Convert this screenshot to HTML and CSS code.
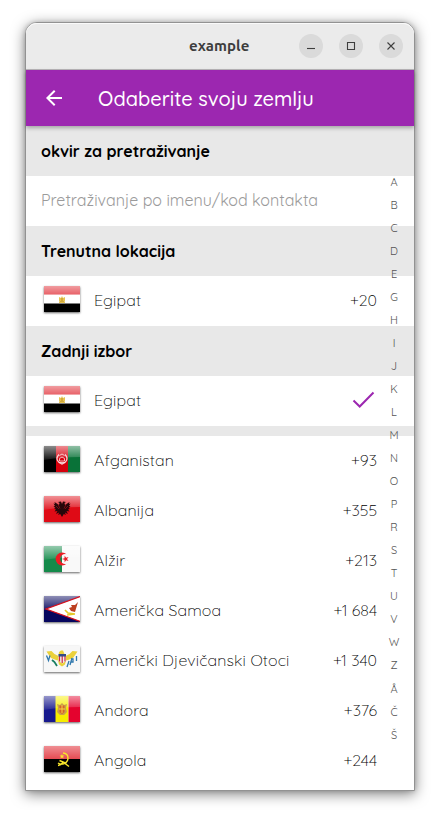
FILE: index.html
```html
<!DOCTYPE html>
<html lang="hr">
<head>
<meta charset="utf-8">
<title>example</title>
<link rel="stylesheet" href="styles.css">
</head>
<body>
<svg class="defs" width="0" height="0">
  <defs>
    <linearGradient id="shine" x1="0" y1="0" x2="0" y2="1">
      <stop offset="0" stop-color="#fff" stop-opacity=".5"/>
      <stop offset="1" stop-color="#fff" stop-opacity=".2"/>
    </linearGradient>
    <linearGradient id="fade" x1="0" y1="0" x2="0" y2="1">
      <stop offset="0" stop-color="#fff" stop-opacity=".55"/>
      <stop offset="1" stop-color="#fff" stop-opacity=".08"/>
    </linearGradient>
    <symbol id="gloss" viewBox="0 0 36 26"><path d="M0 0H36V11Q16 11 0 14Z" fill="url(#fade)"/></symbol>
    <symbol id="egypt" viewBox="0 0 36 26">
      <path fill="#fff" d="M0 0h36v26H0z"/><path fill="#e23a42" d="M0 0h36v8.500H0z"/><path fill="url(#shine)" d="M0 0h36v8.500H0z"/><path d="M0 17.500h36V26H0z"/>
      <path fill="#e8c451" d="M15 11l2 1 1-2 1 2 2-1v4l-1 1h1v1h-6v-1h1l-1-1z"/><path fill="#b98f28" d="M17.500 12h1v3h-1zM15.500 15.500h5v.6h-5z"/>
    </symbol>
  </defs>
</svg>
<main class="window">
  <header class="titlebar">
    <h1>example</h1>
    <div class="controls">
      <span><svg width="24" height="24"><path d="M8 14.500h8"/></svg></span>
      <span><svg width="24" height="24"><path d="M8.500 8.500h7v7h-7z"/></svg></span>
      <span><svg width="24" height="24"><path d="M8.500 8.500l7 7m0-7l-7 7"/></svg></span>
    </div>
  </header>
  <nav class="appbar">
    <svg class="back" width="24" height="24" viewBox="0 0 24 24"><path d="M20 11H7.830l5.590-5.590L12 4l-8 8 8 8 1.410-1.410L7.830 13H20z"/></svg>
    <h2>Odaberite svoju zemlju</h2>
  </nav>
  <section class="content">
    <h3>okvir za pretraživanje</h3>
    <div class="search">Pretraživanje po imenu/kod kontakta</div>
    <h3>Trenutna lokacija</h3>
    <div class="row"><svg class="flag" viewBox="0 0 36 26"><use href="#egypt"/></svg><span class="name">Egipat</span><span class="code">+20</span></div>
    <h3>Zadnji izbor</h3>
    <div class="row"><svg class="flag" viewBox="0 0 36 26"><use href="#egypt"/></svg><span class="name">Egipat</span><svg class="check" width="28" height="24"><path d="M3.500 12.500l6.200 6L23.500 4.500"/></svg></div>
    <div class="divider"></div>
    <div class="row"><svg class="flag" viewBox="0 0 36 26"><path d="M0 0h12v26H0z"/><path fill="#d5000c" d="M12 0h12v26H12z"/><path fill="#097238" d="M24 0h12v26H24z"/><use href="#gloss"/><g fill="none" stroke="#fff" stroke-opacity=".8"><path d="M15 8.500q-3 3-1.500 6t4.500 3.500q3-.5 4.500-3.500t-1.500-6" stroke-width="1.300"/><path d="M15.500 15h5v-2.500L18 11l-2.500 1.500zM15.500 9.500L18 8l2.500 1.500M15 16.500h6" stroke-width=".9"/></g></svg><span class="name">Afganistan</span><span class="code">+93</span></div>
    <div class="row"><svg class="flag" viewBox="0 0 36 26"><path fill="#df0b16" d="M0 0h36v26H0z"/><use href="#gloss"/><path fill="#26070a" d="M18 8l-1-2.500-3 .5 1.500 1L15 9l-4.500-3 .5 2-1.500-.5L11 10l-1.500.2L11.500 12l-1.500.7 2 .8-1.500 2 3-.5-1.500 3 3-1.500-.8 2.500 2-1L18 21l1.800-3 2 1-.8-2.500 3 1.500-1.500-3 3 .5-1.500-2 2-.8-1.500-.7 2-1.800L25 10l1.500-2.500L25 8l.5-2L21 9l-.5-2L22 6l-3-.5z"/><path stroke="#a71319" stroke-width=".6" d="M14 8.500l2 4M22 8.500l-2 4M12 10l3 3M24 10l-3 3"/></svg><span class="name">Albanija</span><span class="code">+355</span></div>
    <div class="row"><svg class="flag" viewBox="0 0 36 26"><path fill="#f9f9f9" d="M0 0h36v26H0z"/><path fill="#148a4a" d="M0 0h18v26H0z"/><use href="#gloss"/><path fill="#ec1c24" d="M22.500 8.200A6.500 6.500 0 1 0 22.500 17.800A5 5 0 1 1 22.500 8.200zM18 13l2.500-.8.200-2.500 1.400 2 2.400-.7-1.500 2 1.500 2-2.400-.7-1.400 2-.2-2.500z"/></svg><span class="name">Alžir</span><span class="code">+213</span></div>
    <div class="row"><svg class="flag" viewBox="0 0 36 26"><path fill="#06065e" d="M0 0h36v26H0z"/><use href="#gloss"/><path fill="#fff" stroke="#d7101d" stroke-width="1.300" d="M37 .3L2 13l35 12.700z"/><path fill="#bd4021" d="M34 6l-3 10-4-1-2-3 3-1-1-2 4 0z"/><path fill="none" stroke="#e5c92b" stroke-width="1.700" d="M21 14l3 3 7 1M23 19l8-1"/></svg><span class="name">Američka Samoa</span><span class="code">+1 684</span></div>
    <div class="row"><svg class="flag" viewBox="0 0 36 26"><path fill="#f7f7f7" d="M0 0h36v26H0z"/><path fill="#ebd13b" d="M14.500 10l.5-4 2-1.500h2L20 7l1.500 3 4-2 3-3 5 .5-2 3-2.500 3.500-5 2-2 .5-1 4-3 2-3-2-1-4-2-.5-5-2L4.500 8.500l-2-3 5-.5 3 3z"/><path d="M14.500 8.500h7.500v6.500l-3.700 2.500-3.800-2.500z" fill="#eee"/><path d="M15.500 10v5.500M18.200 10v7M21 10v5.500" stroke="#cf2740" stroke-width="1.200"/><path fill="#334b87" d="M14.500 8h7.500v2.500h-7.500z"/><path fill="none" stroke="#177d60" stroke-width="1.800" d="M8 14l2.500 2 2.500 4"/><path fill="none" stroke="#2f78ad" stroke-width="1.300" d="M2.500 9.500l2 5 1.500-5M23 21l2-6M28 12l-2 7M27 13h2v3h-2M32.500 10v5"/></svg><span class="name">Američki Djevičanski Otoci</span><span class="code">+1 340</span></div>
    <div class="row"><svg class="flag" viewBox="0 0 36 26"><path fill="#17198d" d="M0 0h12v26H0z"/><path fill="#f7ed00" d="M11.500 0h13v26h-13z"/><path fill="#e4032e" d="M24.500 0H36v26H24.500z"/><use href="#gloss"/><path fill="#c9a04c" d="M13 8l3 1 2-2 2 2 3-1-1 4 1 4-3 3h-4l-3-3 1-4z"/><path fill="#d5622b" d="M15.500 9.500h5V16L18 18l-2.500-2z"/><path stroke="#f4d447" d="M18 9v8M15 13h6"/></svg><span class="name">Andora</span><span class="code">+376</span></div>
    <div class="row"><svg class="flag" viewBox="0 0 36 26"><path d="M0 0h36v26H0z"/><path fill="#df1e28" d="M0 0h36v13H0z"/><path fill="url(#shine)" d="M0 0h36v13H0z"/><path fill="none" stroke="#f7e52b" stroke-width="1.400" d="M19 7q5 .5 5 5t-5 6q-3 .5-5-1M14 19.500q3 0 5-3.500l6 4.500M15.500 14.500l7 3"/><path fill="#f7e52b" d="M18 8l.7 1.500 1.700.1-1.300 1.200.5 1.700-1.600-1-1.500 1 .4-1.700-1.300-1.200 1.700-.1z"/></svg><span class="name">Angola</span><span class="code">+244</span></div>
  </section>
  <aside class="index"><span>A</span><span>B</span><span>C</span><span>D</span><span>E</span><span>G</span><span>H</span><span>I</span><span>J</span><span>K</span><span>L</span><span>M</span><span>N</span><span>O</span><span>P</span><span>R</span><span>S</span><span>T</span><span>U</span><span>V</span><span>W</span><span>Z</span><span>Å</span><span>Č</span><span>Š</span></aside>
</main>
</body>
</html>
```
FILE: styles.css
```css
* { box-sizing: border-box; }
body { margin: 0; height: 819px; padding: 22px 25px 28px; background: #fff; overflow: hidden; font: 300 16px/20px Quicksand, Lato, sans-serif; color: #000; }
.defs { display: block; height: 0; }
h1, h2, h3 { margin: 0; }
.window { position: relative; height: 769px; border: 1px solid #929292; border-radius: 12px 12px 0 0; background: #fff; box-shadow: 0 3px 14px rgba(0,0,0,.5), 0 0 4px rgba(0,0,0,.16); }
.titlebar { height: 47px; display: grid; grid-template-columns: 1fr auto; align-items: center; padding-right: 11px; background: #ebebeb; border-bottom: 1px solid #b9b6b9; border-radius: 11px 11px 0 0; box-shadow: inset 0 1px #fafafa; }
.titlebar h1 { padding-left: 163px; font: bold 15px/20px Ubuntu, "Noto Sans", sans-serif; letter-spacing: .1px; color: #3d3d3d; }
.controls { display: flex; gap: 16px; }
.controls span { width: 24px; height: 24px; border-radius: 50%; background: #dadada; }
.controls svg { display: block; fill: none; stroke: #3d3d3d; stroke-width: 1.1; }
.appbar { position: relative; height: 56px; display: flex; align-items: center; padding: 0 0 0 16px; gap: 32px; background: #9c27b0; color: #fff; box-shadow: 0 2px 4px rgba(0,0,0,.3); }
.back { fill: #fff; }
.appbar h2 { padding-top: 1px; font-size: 20px; font-weight: 500; line-height: 26px; white-space: nowrap; }
h3 { height: 50px; display: flex; align-items: center; padding-left: 15px; background: #e8e8e8; font-size: 16px; font-weight: 700; }
.search { height: 50px; padding: 14px 15px; color: #9b9b9b; font-weight: 400; white-space: nowrap; }
.row { height: 50px; display: flex; align-items: center; padding: 0 37px 5px 18px; white-space: nowrap; }
.flag { width: 36px; height: 26px; margin: 0 14px 0 0; flex: none; box-shadow: 0 1px 2px rgba(0,0,0,.6); }
.name { margin-right: auto; letter-spacing: .12px; }
.name, .code { padding-top: 2px; }
.check { margin: 3px -1px 0 0; fill: none; stroke: #9c27b0; stroke-width: 2; }
.divider { height: 10px; background: #e8e8e8; }
.index { position: absolute; top: 147.500px; right: 10px; width: 20px; font-size: 11px; font-weight: 400; color: #555; }
.index span { display: block; height: 23.060px; line-height: 23.060px; text-align: center; }
```
